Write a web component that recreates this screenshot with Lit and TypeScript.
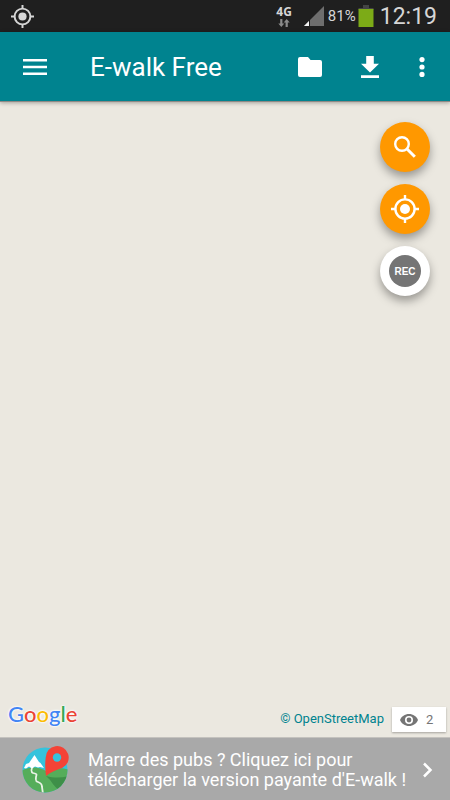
import { LitElement, html, css, svg } from "lit";
import { customElement, property } from "lit/decorators.js";

const target = svg`
  <circle cx="14" cy="14" r="9.6" fill="none" stroke="currentColor" stroke-width="2.4"/>
  <circle cx="14" cy="14" r="5" fill="currentColor"/>
  <path d="M14 0V4.5M14 23.5V28M0 14H4.5M23.5 14H28" stroke="currentColor" stroke-width="2.4"/>`;

@customElement("status-bar")
class StatusBar extends LitElement {
  static styles = css`
    :host {
      display: flex;
      align-items: center;
      height: 32px;
      padding: 0 13px 0 11px;
      background: #1f1f1f;
      color: #d6d6d6;
      box-sizing: border-box;
    }
    svg { display: block; flex: none; }
    .gps { margin-right: auto; }
    .net {
      display: flex;
      flex-direction: column;
      align-items: center;
      font: bold 12px/13px "Open Sans", "Noto Sans", sans-serif;
      margin-right: 12px;
    }
    .signal { margin-right: 4px; }
    .percent { font-size: 15px; margin-right: 2px; }
    .battery { margin-right: 6px; }
    .time { font-size: 23px; }
  `;
  render() {
    return html`
      <svg class="gps" width="23" height="23" viewBox="0 0 28 28">${target}</svg>
      <div class="net">
        4G
        <svg width="12" height="10" viewBox="0 0 12 10" fill="#8a8a8a">
          <path d="M2.2 1h2.2v4.600H6.300L3.300 9 0.300 5.600H2.200zM7.600 9h2.200V4.400h1.900L8.700 1 5.700 4.400h1.900z"/>
        </svg>
      </div>
      <svg class="signal" width="20" height="20" viewBox="0 0 20 20">
        <path d="M20 0V20H0z" fill="#6e6e6e"/>
        <path d="M5 15V20H0z" fill="#f2f2f2"/>
        <path d="M5.500 14V20" stroke="#1f1f1f"/>
      </svg>
      <span class="percent">81%</span>
      <svg class="battery" width="16" height="22" viewBox="0 0 16 22">
        <path d="M5 0h6v3h4.500v2H.5V3H5z" fill="#444"/>
        <path d="M.5 4h15v18H.5z" fill="#7cab17"/>
      </svg>
      <span class="time">12:19</span>
    `;
  }
}

@customElement("app-toolbar")
class AppToolbar extends LitElement {
  static styles = css`
    :host {
      display: flex;
      align-items: center;
      height: 70px;
      padding: 0 6px 0 11px;
      background: #00838f;
      color: #fff;
      border-bottom: 1px solid #8f8a86;
      box-shadow: 0 1px 4px rgba(0, 0, 0, 0.3);
      box-sizing: border-box;
      position: relative;
    }
    h1 {
      flex: 1;
      margin: 0 0 0 31px;
      padding-top: 1px;
      font-size: 26px;
      line-height: 32px;
      font-weight: 400;
    }
    button {
      display: grid;
      place-items: center;
      width: 48px;
      height: 48px;
      padding: 0;
      border: 0;
      background: none;
      color: inherit;
    }
    .wide { width: 60px; }
    .more { width: 44px; }
    svg { display: block; fill: currentColor; }
  `;
  render() {
    return html`
      <button aria-label="Menu">
        <svg width="24" height="18" viewBox="0 0 24 18"><path d="M0 1h24v2.500H0zM0 7.800h24v2.500H0zM0 14.600h24v2.500H0z"/></svg>
      </button>
      <h1>E-walk Free</h1>
      <button class="wide" aria-label="Dossiers">
        <svg width="24" height="20" viewBox="0 0 24 20"><path d="M2 0h8l2.600 3H22a2 2 0 0 1 2 2v13a2 2 0 0 1-2 2H2a2 2 0 0 1-2-2V2a2 2 0 0 1 2-2z"/></svg>
      </button>
      <button class="wide" aria-label="Télécharger">
        <svg width="18" height="22" viewBox="0 0 18 22"><path d="M5.200 0h7.600v7.700H18L9 16.600 0 7.700h5.200zM0 19.200h18v2.800H0z"/></svg>
      </button>
      <button class="more" aria-label="Plus d'options">
        <svg width="6" height="20" viewBox="0 0 6 20"><circle cx="3" cy="2.600" r="2.600"/><circle cx="3" cy="10" r="2.600"/><circle cx="3" cy="17.400" r="2.600"/></svg>
      </button>
    `;
  }
}

@customElement("map-view")
class MapView extends LitElement {
  @property({ type: Number }) views = 2;
  static styles = css`
    :host {
      flex: 1;
      display: flex;
      flex-direction: column;
      justify-content: space-between;
      background: #ebe8e0;
    }
    svg { display: block; }
    .actions {
      display: flex;
      flex-direction: column;
      align-items: flex-end;
      gap: 12px;
      padding: 20px 20px 0;
    }
    .fab {
      display: grid;
      place-items: center;
      width: 50px;
      height: 50px;
      padding: 0;
      border: 0;
      border-radius: 50%;
      background: #ff9800;
      color: #fff;
      box-shadow: 0 5px 10px rgba(0, 0, 0, 0.35);
    }
    .record { background: #fff; }
    .rec {
      width: 32px;
      height: 32px;
      border-radius: 50%;
      background: #757575;
      font: bold 10px/34px "Liberation Sans", sans-serif;
      text-align: center;
    }
    .footer {
      display: flex;
      align-items: flex-end;
      padding: 0 4px 5px 8px;
    }
    .google {
      margin-right: auto;
      padding-bottom: 5px;
      font: 500 22px/26px Lato, sans-serif;
      text-shadow: 0 0 2px #fff, 0 0 2px #fff, 0 0 3px #fff;
    }
    .b { color: #4285f4; }
    .r { color: #ea4335; }
    .y { color: #fbbc05; }
    .g { color: #34a853; }
    .osm {
      margin-right: 8px;
      color: #00838f;
      font-size: 13px;
      line-height: 26px;
      text-decoration: none;
    }
    .views {
      display: flex;
      align-items: center;
      gap: 8px;
      width: 54px;
      height: 25px;
      padding: 0 8px;
      box-sizing: border-box;
      background: #fff;
      color: #757575;
      font-size: 13px;
      box-shadow: 0 1px 2px rgba(0, 0, 0, 0.3);
    }
  `;
  render() {
    return html`
      <div class="actions">
        <button class="fab" aria-label="Rechercher">
          <svg width="22" height="22" viewBox="0 0 22 22" fill="none" stroke="#fff">
            <circle cx="8" cy="8" r="6.800" stroke-width="2.400"/>
            <path d="M12.800 12.800L20.800 20.800" stroke-width="3"/>
          </svg>
        </button>
        <button class="fab" aria-label="Ma position">
          <svg width="28" height="28" viewBox="0 0 28 28">${target}</svg>
        </button>
        <button class="fab record"><span class="rec">REC</span></button>
      </div>
      <div class="footer">
        <span class="google"><span class="b">G</span><span class="r">o</span><span class="y">o</span><span class="b">g</span><span class="g">l</span><span class="r">e</span></span>
        <a class="osm" href="#osm">© OpenStreetMap</a>
        <span class="views">
          <svg width="18" height="12" viewBox="0 0 18 12">
            <path d="M9 0C4.900 0 1.400 2.500 0 6c1.400 3.500 4.900 6 9 6s7.600-2.500 9-6C16.600 2.500 13.100 0 9 0z" fill="#757575"/>
            <circle cx="9" cy="6" r="4" fill="#fff"/><circle cx="9" cy="6" r="2.400" fill="#757575"/>
          </svg>
          ${this.views}
        </span>
      </div>
    `;
  }
}

@customElement("promo-banner")
class PromoBanner extends LitElement {
  static styles = css`
    :host { display: block; }
    a {
      display: flex;
      align-items: center;
      min-height: 63px;
      padding: 2px 16px 0 21px;
      box-sizing: border-box;
      border-top: 1px solid #c4c2be;
      background: #a9a9a9;
      color: #fff;
      font-size: 18px;
      line-height: 20px;
      text-decoration: none;
    }
    p { flex: 1; margin: 0 0 0 19px; }
    svg { display: block; flex: none; }
  `;
  render() {
    return html`
      <a href="#premium">
        <svg width="48" height="48" viewBox="0 0 48 48">
          <defs><clipPath id="disc"><circle cx="24" cy="24" r="22.500"/></clipPath></defs>
          <g clip-path="url(#disc)">
            <path d="M0 0h48v48H0z" fill="#35c3dc"/>
            <path d="M0 25C10 20 18 21 25 25c8-3 16-4 23-1v24H0z" fill="#55ad5a"/>
            <path d="M25 30c8 2 15 2 23 0v9c-4 2-8 5-11 4-4-2-6-8-12-13z" fill="#3e8f48"/>
            <path d="M3 22l2-4 3-1 5.500-8 4.500 7 1.500 1 3.500 5-4-1-2 .5-3-1-3 2-3-2-3 2z" fill="#fff"/>
            <path d="M11 22c-1 3-1 4 1 5 4 1 4 1 3 4 0 3-1 4 2 5 3 1 4 2 4 5l1 7" fill="none" stroke="#e9f2e6" stroke-width="1.800"/>
          </g>
          <path d="M25 30C24 23 24 17 24.700 11.500A11.500 11.500 0 1 1 41.500 21.800C35 24 30 26 25 30z" fill="#f44336"/>
          <circle cx="36" cy="11.500" r="4.200" fill="#35c3dc"/>
        </svg>
        <p>Marre des pubs ? Cliquez ici pour télécharger la version payante d'E-walk !</p>
        <svg width="12" height="16" viewBox="0 0 12 16"><path d="M2 1.500L8.500 8 2 14.500" fill="none" stroke="#fff" stroke-width="2.500"/></svg>
      </a>
    `;
  }
}

@customElement("app-root")
class AppRoot extends LitElement {
  static styles = css`
    :host {
      display: flex;
      flex-direction: column;
      min-height: 100vh;
      font-family: Roboto, "Liberation Sans", sans-serif;
    }
  `;
  render() {
    return html`
      <status-bar></status-bar>
      <app-toolbar></app-toolbar>
      <map-view .views=${2}></map-view>
      <promo-banner></promo-banner>
    `;
  }
}
